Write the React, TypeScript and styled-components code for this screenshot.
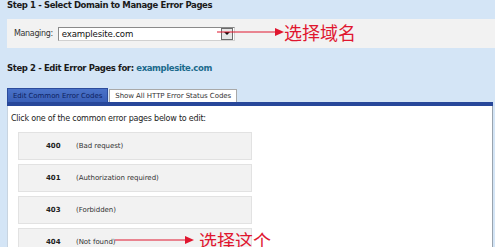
import React from 'react';
import styled, { createGlobalStyle } from 'styled-components';

const GlobalStyle = createGlobalStyle`
    html, body {
        margin: 0;
        padding: 0;
        background: #d4e5f6;
        overflow: hidden;
    }
    body {
        font-family: 'DejaVu Sans', Verdana, sans-serif;
        color: #222;
    }
`;

const Page = styled.div`
    width: 495px;
    height: 247px;
    padding-left: 7px;
    box-sizing: border-box;
    display: flex;
    flex-direction: column;
    & > * {
        flex-shrink: 0;
    }
`;

const StepTitle = styled.h2<{ top: number }>`
    margin: ${({ top }) => top}px 0 0;
    height: 10px;
    line-height: 10px;
    font-size: 8.5px;
    letter-spacing: -0.38px;
    font-weight: bold;
    color: #1a1a1a;
    white-space: nowrap;
`;

const Domain = styled.span`
    color: #1b6a8c;
`;

const DomainPanel = styled.div`
    position: relative;
    margin-top: 9px;
    height: 29px;
    background: #f2f2f2;
    display: flex;
    align-items: center;
    gap: 5px;
    padding-left: 7px;
    font-size: 8px;
    letter-spacing: -0.35px;
    color: #333;
`;

const Select = styled.div`
    width: 177px;
    height: 14px;
    box-sizing: border-box;
    border: 1px solid #8a8a8a;
    border-right-color: #d0d0d0;
    border-bottom-color: #d0d0d0;
    background: #fff;
    display: flex;
    align-items: center;
    justify-content: space-between;
    padding-left: 3px;
    font-size: 8.6px;
    letter-spacing: -0.15px;
    color: #111;
`;

const SelectButton = styled.div`
    width: 10px;
    height: 10px;
    margin-right: 1px;
    border: 1px solid #6c6c6c;
    background: #e6e6e6;
    display: flex;
    align-items: center;
    justify-content: center;
    &::after {
        content: '';
        border-left: 3px solid transparent;
        border-right: 3px solid transparent;
        border-top: 3px solid #111;
    }
`;

const Note = styled.div<{ left: number; top: number; gap: number }>`
    position: absolute;
    left: ${({ left }) => left}px;
    top: ${({ top }) => top}px;
    display: flex;
    align-items: center;
    gap: ${({ gap }) => gap}px;
    color: #e0162f;
    font-family: 'Noto Sans CJK SC', sans-serif;
    font-size: 18px;
    letter-spacing: 0;
    line-height: 20px;
    white-space: nowrap;
    pointer-events: none;
`;

const Tabs = styled.div`
    margin-top: 15px;
    display: flex;
    align-items: flex-end;
    gap: 1px;
    height: 14px;
`;

const Tab = styled.div<{ active?: boolean }>`
    height: ${({ active }) => (active ? 14 : 13)}px;
    box-sizing: border-box;
    padding: 0 5px;
    display: flex;
    align-items: center;
    font-size: 7px;
    letter-spacing: -0.05px;
    white-space: nowrap;
    border: 1px solid ${({ active }) => (active ? '#2c4c9c' : '#a9a9a9')};
    border-bottom: none;
    background: ${({ active }) => (active ? 'linear-gradient(#4a72c8, #3a60b8)' : '#fff')};
    color: ${({ active }) => (active ? '#0e2260' : '#333')};
`;

const TabBar = styled.div`
    height: 4px;
    width: 486px;
    background: #27479a;
`;

const Content = styled.div`
    position: relative;
    flex: 1 1 auto;
    min-height: 0;
    overflow: hidden;
    width: 486px;
    box-sizing: border-box;
    background: #fff;
    border-left: 1px solid #c8d4e0;
    border-right: 1px solid #9aa4ae;
    padding: 8px 0 0 3px;
    font-size: 8px;
    letter-spacing: -0.22px;
    color: #222;
`;

const Intro = styled.p`
    margin: 0;
    height: 10px;
    line-height: 10px;
`;

const ErrorList = styled.div`
    margin: 8px 0 0 7px;
    display: flex;
    flex-direction: column;
    gap: 4px;
`;

const ErrorRow = styled.div`
    width: 234px;
    height: 28px;
    flex-shrink: 0;
    box-sizing: border-box;
    background: #f2f2f2;
    border: 1px solid #e2e2e2;
    display: flex;
    align-items: center;
    font-size: 7px;
    letter-spacing: -0.05px;
    color: #333;
`;

const Code = styled.span`
    width: 57px;
    padding-left: 27px;
    box-sizing: border-box;
    font-weight: bold;
    color: #222;
`;

const Arrow = ({ width }: { width: number }) => (
    <svg width={width} height="10" viewBox={`0 0 ${width} 10`}>
        <line x1="0" y1="5" x2={width - 6} y2="5" stroke="#e0162f" strokeWidth="1.2" />
        <polygon points={`${width - 9},1 ${width},5 ${width - 9},9`} fill="#e0162f" />
    </svg>
);

const errors = [
    { code: '400', label: '(Bad request)' },
    { code: '401', label: '(Authorization required)' },
    { code: '403', label: '(Forbidden)' },
    { code: '404', label: '(Not found)' },
];

export default function App() {
    return (
        <Page>
            <GlobalStyle />
            <StepTitle top={0}>Step 1 - Select Domain to Manage Error Pages</StepTitle>
            <DomainPanel>
                <span>Managing:</span>
                <Select>
                    examplesite.com
                    <SelectButton />
                </Select>
                <Note left={210} top={3} gap={0}>
                    <Arrow width={67} />
                    选择域名
                </Note>
            </DomainPanel>
            <StepTitle top={15}>
                Step 2 - Edit Error Pages for: <Domain>examplesite.com</Domain>
            </StepTitle>
            <Tabs>
                <Tab active>Edit Common Error Codes</Tab>
                <Tab>Show All HTTP Error Status Codes</Tab>
            </Tabs>
            <TabBar />
            <Content>
                <Intro>Click one of the common error pages below to edit:</Intro>
                <ErrorList>
                    {errors.map((e) => (
                        <ErrorRow key={e.code}>
                            <Code>{e.code}</Code>
                            {e.label}
                        </ErrorRow>
                    ))}
                </ErrorList>
                <Note left={107} top={124} gap={5}>
                    <Arrow width={79} />
                    选择这个
                </Note>
            </Content>
        </Page>
    );
}
